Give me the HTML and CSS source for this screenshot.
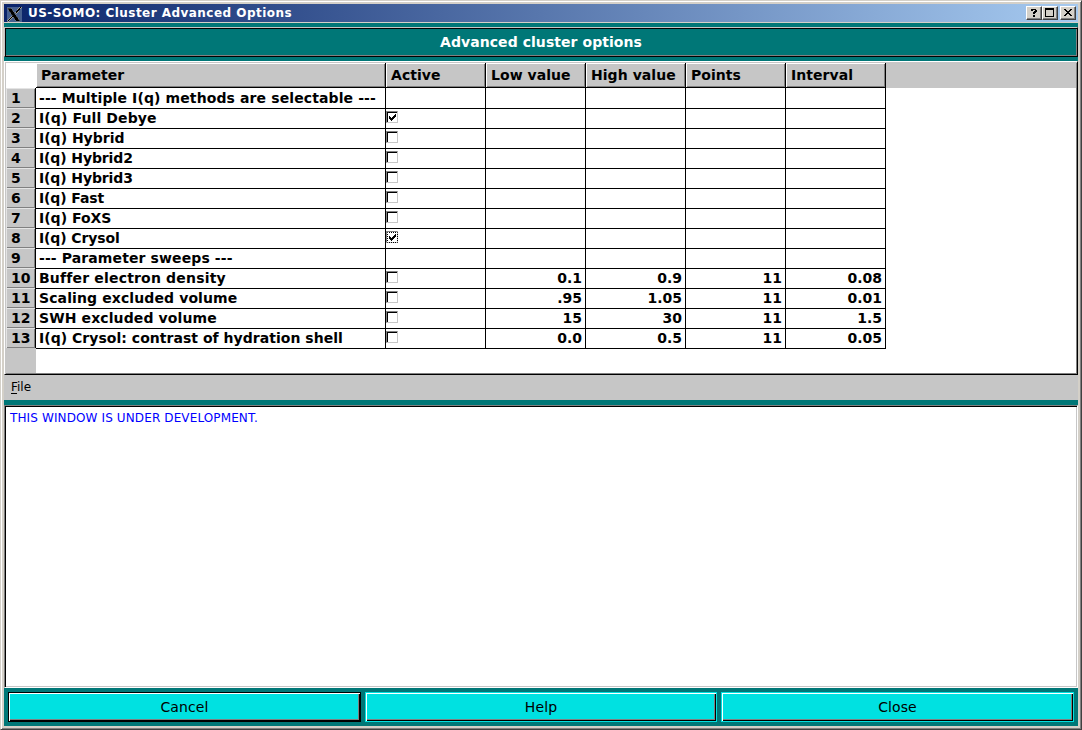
FILE: index.html
```html
<!DOCTYPE html>
<html lang="en">
<head>
<meta charset="utf-8">
<title>US-SOMO: Cluster Advanced Options</title>
<link rel="stylesheet" href="styles.css">
</head>
<body>
<div class="window">
  <header class="titlebar">
    <svg class="logo" width="15" height="15" viewBox="0 0 15 15" shape-rendering="crispEdges"><rect width="15" height="15" fill="#46608f"/><path d="M14 0L8.500 6.500M6.500 8.500L1 14.500" stroke="#9a9a94" stroke-width="2.200"/><path d="M0 1h4l9 13h-4z" fill="#000" stroke="#777b80" stroke-width=".5"/><path d="M14 0L8.500 6.500M6.500 8.500L1 14" stroke="#000" stroke-width="1.200"/></svg>
    <h1 class="caption">US-SOMO: Cluster Advanced Options</h1>
    <span class="wbtn"><svg width="14" height="12" viewBox="0 0 14 12" shape-rendering="crispEdges"><path d="M4 2h5v1h1v2h-1v1h-1v1h-2v-2h1v-1h1v-1h-2v1h-2zM6 8h2v2h-2z"/></svg></span>
    <span class="wbtn"><svg width="14" height="12" viewBox="0 0 14 12" shape-rendering="crispEdges"><path fill-rule="evenodd" d="M2 1h9v9h-9zM3 3v6h7v-6z"/></svg></span>
    <span class="wbtn wbtn-close"><svg width="14" height="12" viewBox="0 0 14 12" shape-rendering="crispEdges"><path d="M3 2h2v1h1v1h2v-1h1v-1h2v1h-1v1h-1v1h-1v1h1v1h1v1h1v1h-2v-1h-1v-1h-2v1h-1v1h-2v-1h1v-1h1v-1h1v-1h-1v-1h-1v-1h-1z"/></svg></span>
  </header>
  <main class="client">
    <h2 class="banner">Advanced cluster options</h2>
    <section class="sheet">
      <div class="row head"><span class="corner"></span><span class="hcell">Parameter</span><span class="hcell">Active</span><span class="hcell">Low value</span><span class="hcell">High value</span><span class="hcell">Points</span><span class="hcell">Interval</span></div>
      <div class="row"><b class="num">1</b><span class="loose">--- Multiple I(q) methods are selectable ---</span><span></span><span></span><span></span><span></span><span></span></div>
      <div class="row"><b class="num">2</b><span class="loose">I(q) Full Debye</span><span><i class="check"><svg class="tick" width="7" height="7" viewBox="0 0 7 7" shape-rendering="crispEdges"><path d="M0 2h1v1h1v1h1v-1h1v-1h1v-1h1v-1h1v3h-1v1h-1v1h-1v1h-1v1h-1v-1h-1v-1h-1z"/></svg></i></span><span></span><span></span><span></span><span></span></div>
      <div class="row"><b class="num">3</b><span>I(q) Hybrid</span><span><i class="check"></i></span><span></span><span></span><span></span><span></span></div>
      <div class="row"><b class="num">4</b><span class="tight">I(q) Hybrid2</span><span><i class="check"></i></span><span></span><span></span><span></span><span></span></div>
      <div class="row"><b class="num">5</b><span class="tight">I(q) Hybrid3</span><span><i class="check"></i></span><span></span><span></span><span></span><span></span></div>
      <div class="row"><b class="num">6</b><span class="tight">I(q) Fast</span><span><i class="check"></i></span><span></span><span></span><span></span><span></span></div>
      <div class="row"><b class="num">7</b><span>I(q) FoXS</span><span><i class="check"></i></span><span></span><span></span><span></span><span></span></div>
      <div class="row"><b class="num">8</b><span class="tight">I(q) Crysol</span><span><i class="check focused"><svg class="tick" width="7" height="7" viewBox="0 0 7 7" shape-rendering="crispEdges"><path d="M0 2h1v1h1v1h1v-1h1v-1h1v-1h1v-1h1v3h-1v1h-1v1h-1v1h-1v1h-1v-1h-1v-1h-1z"/></svg><svg class="dots" width="11" height="11" viewBox="0 0 11 11"><rect x=".5" y=".5" width="10" height="10"/></svg></i></span><span></span><span></span><span></span><span></span></div>
      <div class="row"><b class="num">9</b><span class="loose">--- Parameter sweeps ---</span><span></span><span></span><span></span><span></span><span></span></div>
      <div class="row"><b class="num">10</b><span class="looser">Buffer electron density</span><span><i class="check"></i></span><span>0.1</span><span>0.9</span><span>11</span><span>0.08</span></div>
      <div class="row"><b class="num">11</b><span class="loose">Scaling excluded volume</span><span><i class="check"></i></span><span>.95</span><span>1.05</span><span>11</span><span>0.01</span></div>
      <div class="row"><b class="num">12</b><span class="loose">SWH excluded volume</span><span><i class="check"></i></span><span>15</span><span>30</span><span>11</span><span>1.5</span></div>
      <div class="row"><b class="num">13</b><span class="slight">I(q) Crysol: contrast of hydration shell</span><span><i class="check"></i></span><span>0.0</span><span>0.5</span><span>11</span><span>0.05</span></div>
      <div class="rest"></div>
    </section>
    <nav class="menubar"><span class="menu"><u>F</u>ile</span></nav>
    <section class="log">THIS WINDOW IS UNDER DEVELOPMENT.</section>
    <footer class="actions">
      <button class="btn btn-default">Cancel</button>
      <button class="btn">Help</button>
      <button class="btn">Close</button>
    </footer>
  </main>
</div>
</body>
</html>
```
FILE: styles.css
```css
* { box-sizing: border-box; }
body { margin: 0; font-family: "DejaVu Sans", sans-serif; color: #000; overflow: hidden; }
.window {
  width: 1082px; height: 730px; padding: 3px; background: #d4d0c8;
  border: 1px solid #d4d0c8; border-right-color: #404040; border-bottom-color: #404040;
  box-shadow: inset 1px 1px #fff, inset -1px -1px #808080;
}
.titlebar {
  height: 18px; display: flex; align-items: center; padding: 0 2px 0 3px;
  background: linear-gradient(90deg, #0a246a, #a6caf0);
}
.logo { display: block; margin-right: 6px; margin-top: 2px; }
.caption { margin: 0; flex: 1; font-size: 12px; line-height: 18px; letter-spacing: .46px; color: #fff; }
.wbtn {
  width: 16px; height: 14px; background: #d4d0c8; border: 1px solid #fff;
  border-right-color: #404040; border-bottom-color: #404040; box-shadow: inset -1px -1px #808080;
}
.wbtn svg { display: block; }
.wbtn-close { margin-left: 2px; }
.client { margin-top: 1px; height: 703px; background: #007777; display: flex; flex-direction: column; padding-top: 4px; }
.banner {
  margin: 0; height: 30px; line-height: 28px; text-align: center; font-size: 14px; letter-spacing: .06px; color: #fff;
  border: 1px solid #c6c6c6; border-right-color: #000; border-bottom-color: #000;
  box-shadow: inset 1px 1px #000, inset -1px -1px #808080;
}
.sheet {
  margin-top: 4px; height: 314px; background: #fff; display: flex; flex-direction: column;
  border: 1px solid #fff; border-right-color: #000; border-bottom-color: #000;
  box-shadow: inset 1px 1px #c6c6c6, inset -1px -1px #808080; padding: 1px;
}
.row { display: grid; grid-template-columns: 30px 350px repeat(5, 100px); height: 20px; flex: none; font-size: 14px; font-weight: bold; line-height: 20px; white-space: nowrap; }
.row > span { border-right: 1px solid #000; border-bottom: 1px solid #000; padding: 0 3px; text-align: right; }
.row > span:nth-child(2) { text-align: left; }
.row > span:nth-child(3) { padding: 3px 0 0 0; }
.row > .num {
  padding-left: 5px; background: #c6c6c6; border-right: 1px solid #000; border-bottom: 1px solid #000;
  box-shadow: inset 1px 1px #e4e4e4, inset -1px -1px #808080;
}
.slight { letter-spacing: .03px; }
.loose { letter-spacing: .11px; }
.looser { letter-spacing: .18px; }
.tight { letter-spacing: -.12px; }
.head { height: 25px; line-height: 24px; background: #c6c6c6; }
.row > .corner { background: #fff; border: 0; }
.row > .hcell, .row > .hcell:nth-child(3) { padding: 0 0 0 5px; text-align: left; letter-spacing: .05px; box-shadow: inset 1px 1px #fff, inset -1px -1px #808080; }
.check {
  display: block; width: 12px; height: 12px; position: relative; border: 1px solid #808080;
  border-right-color: #c6c6c6; border-bottom-color: #c6c6c6; box-shadow: inset 1px 1px #000;
}
.tick { display: block; margin: 2px; }
.focused { box-shadow: none; }
.dots { position: absolute; left: 0; top: 0; fill: none; stroke: #000; stroke-dasharray: 1 1; stroke-dashoffset: .5; }
.rest { flex: 1; width: 30px; background: #c6c6c6; }
.menubar { height: 25px; padding: 4px 7px; background: #c6c6c6; font-size: 12px; line-height: 16px; }
.menu u { text-underline-offset: 2px; }
.log {
  margin-top: 5px; height: 283px; padding: 4px 5px; background: #fff; color: #00f; font-size: 12px; line-height: 16px; letter-spacing: .12px;
  border: 1px solid #808080; border-right-color: #fff; border-bottom-color: #fff;
  box-shadow: inset 1px 1px #000, inset -1px -1px #c6c6c6;
}
.actions { display: grid; grid-template-columns: 353px 352px 353px; gap: 4px; padding: 4px; }
.btn {
  height: 30px; padding: 0; font: 14px/26px "DejaVu Sans", sans-serif; letter-spacing: .1px; color: #000; background: #00e1e1;
  border: 1px solid #00e1e1;
  box-shadow: inset 1px 1px #fff, inset -1px -1px #000, inset -2px -2px #808080;
}
.btn-default { border-color: #000; }
```
